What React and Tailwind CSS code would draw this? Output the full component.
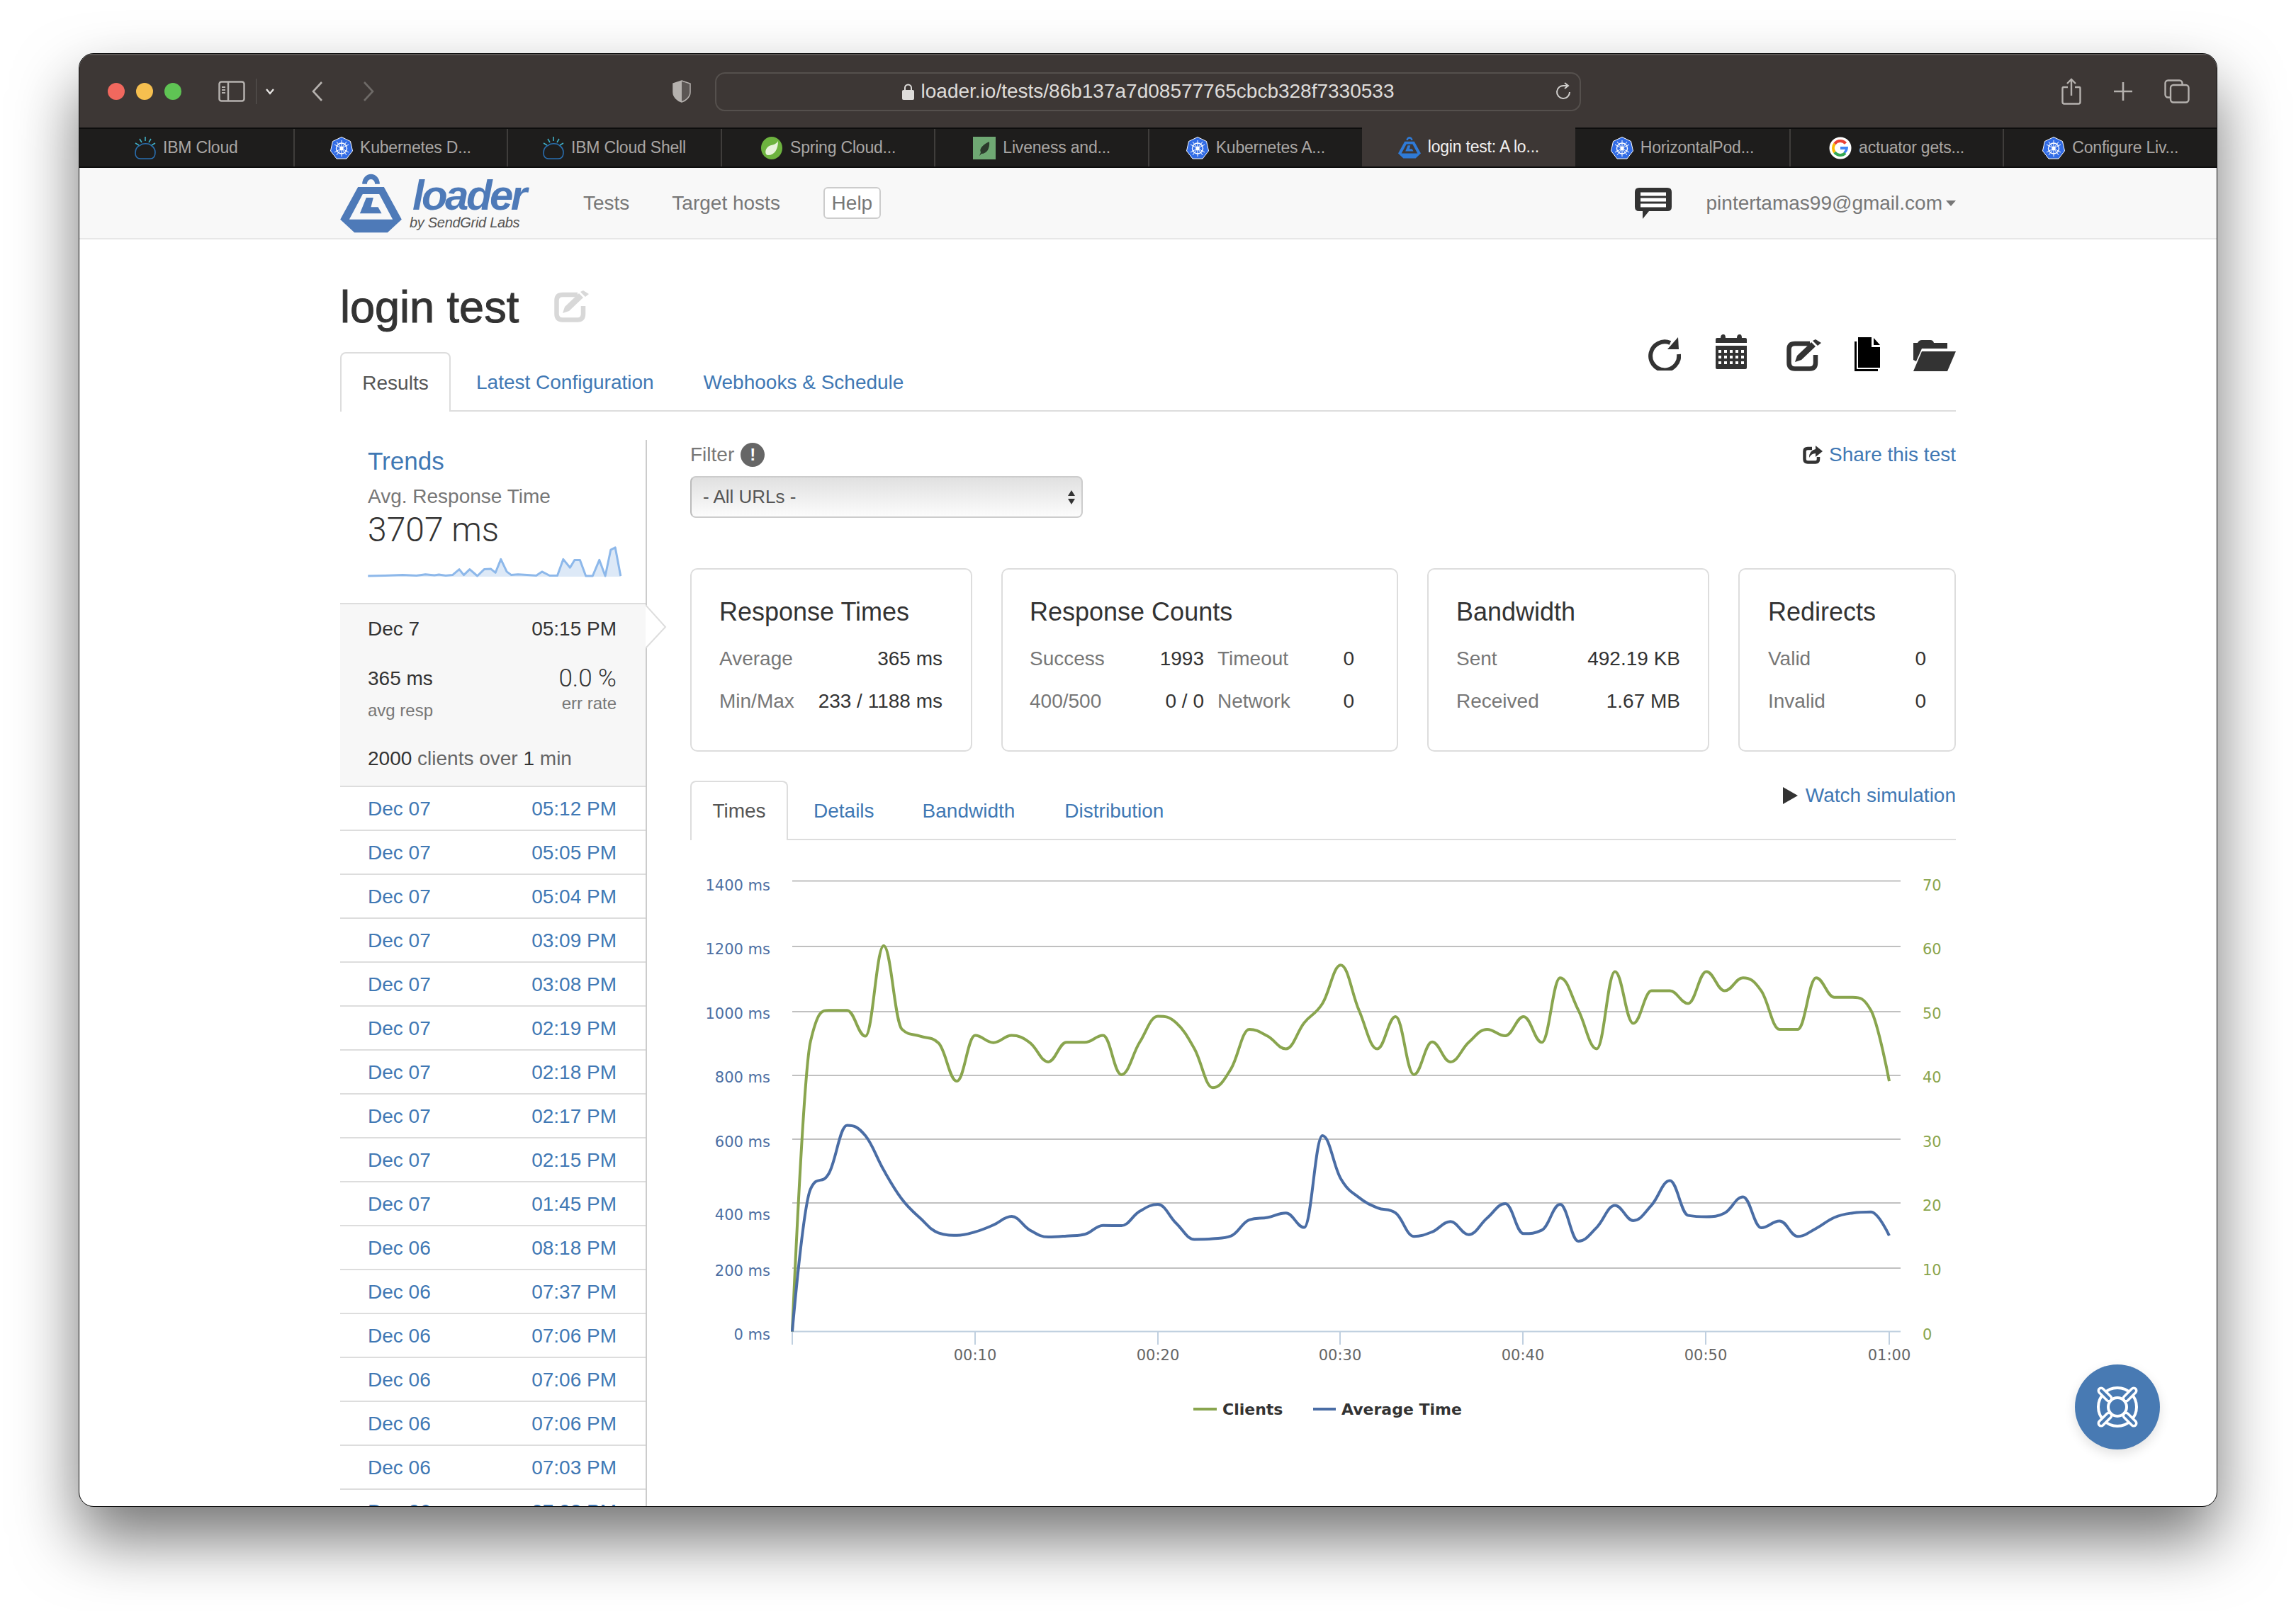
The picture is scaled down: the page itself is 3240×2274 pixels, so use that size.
import React from 'react';

const TABS = [
  { icon: 'ibm', label: 'IBM Cloud' },
  { icon: 'k8s', label: 'Kubernetes D...' },
  { icon: 'ibm', label: 'IBM Cloud Shell' },
  { icon: 'spring', label: 'Spring Cloud...' },
  { icon: 'leaf', label: 'Liveness and...' },
  { icon: 'k8s', label: 'Kubernetes A...' },
  { icon: 'loader', label: 'login test: A lo...', active: true },
  { icon: 'k8s', label: 'HorizontalPod...' },
  { icon: 'google', label: 'actuator gets...' },
  { icon: 'k8s', label: 'Configure Liv...' },
];

const RUNS = [
  ['Dec 07', '05:12 PM'], ['Dec 07', '05:05 PM'], ['Dec 07', '05:04 PM'], ['Dec 07', '03:09 PM'],
  ['Dec 07', '03:08 PM'], ['Dec 07', '02:19 PM'], ['Dec 07', '02:18 PM'], ['Dec 07', '02:17 PM'],
  ['Dec 07', '02:15 PM'], ['Dec 07', '01:45 PM'], ['Dec 06', '08:18 PM'], ['Dec 06', '07:37 PM'],
  ['Dec 06', '07:06 PM'], ['Dec 06', '07:06 PM'], ['Dec 06', '07:06 PM'], ['Dec 06', '07:03 PM'],
  ['Dec 06', '07:02 PM'],
];

// per-second samples, read off the chart (zoomed pixel rows)
const CLIENTS = [1445, 600, 510, 510, 585, 322, 565, 585, 605, 716, 583, 604, 583, 604, 660, 603, 603, 583, 697, 603, 527, 546, 622, 735, 680, 565, 585, 622, 546, 490, 378, 510, 622, 528, 697, 602, 660, 603, 565, 584, 528, 603, 415, 510, 622, 397, 548, 453, 453, 490, 397, 453, 415, 453, 565, 565, 415, 472, 472, 510, 716];
const AVG_TIME = [1445, 1030, 985, 845, 875, 975, 1060, 1115, 1158, 1165, 1155, 1135, 1110, 1150, 1170, 1167, 1162, 1136, 1137, 1095, 1075, 1130, 1177, 1175, 1167, 1120, 1113, 1100, 1142, 875, 1000, 1055, 1085, 1100, 1168, 1155, 1125, 1163, 1115, 1073, 1160, 1150, 1075, 1182, 1142, 1078, 1122, 1077, 1006, 1107, 1111, 1100, 1053, 1143, 1123, 1168, 1145, 1113, 1100, 1097, 1166];

const SPARK = [[93, 918], [130, 917], [170, 915], [200, 917], [220, 913], [240, 916], [250, 914], [265, 917], [280, 915], [295, 898], [305, 915], [318, 898], [335, 918], [350, 898], [365, 897], [375, 908], [387, 868], [400, 905], [410, 915], [425, 913], [445, 915], [465, 917], [478, 905], [495, 917], [512, 917], [525, 868], [540, 893], [550, 870], [562, 870], [575, 918], [590, 918], [605, 870], [618, 918], [630, 840], [640, 833], [652, 918]];

const GRID_Y = [1244.5, 1337, 1429, 1519, 1609, 1699, 1791, 1880.5];
const LEFT_LABELS = [['1400 ms', 1258], ['1200 ms', 1348], ['1000 ms', 1439], ['800 ms', 1529], ['600 ms', 1620], ['400 ms', 1723], ['200 ms', 1802], ['0 ms', 1892]];
const RIGHT_LABELS = [['70', 1258], ['60', 1348], ['50', 1439], ['40', 1529], ['30', 1620], ['20', 1710], ['10', 1801], ['0', 1892]];
const X_LABELS = [['00:10', 1376], ['00:20', 1634], ['00:30', 1891], ['00:40', 2149], ['00:50', 2407], ['01:00', 2666]];

// same curve the chart library draws: spline with smoothing 1.5
function splinePath(samples) {
  const pts = samples.map((py, t) => [1118 + 25.8 * t, 1180 + py / 2.063]);
  const conts = pts.map(([x, y], i) => {
    if (i === 0 || i === pts.length - 1) return null;
    const [lx, ly] = pts[i - 1];
    const [nx, ny] = pts[i + 1];
    let lcx = (1.5 * x + lx) / 2.5;
    let lcy = (1.5 * y + ly) / 2.5;
    let rcx = (1.5 * x + nx) / 2.5;
    let rcy = (1.5 * y + ny) / 2.5;
    const corr = ((rcy - lcy) * (rcx - x)) / (rcx - lcx) + y - rcy;
    lcy += corr;
    rcy += corr;
    if (lcy > ly && lcy > y) { lcy = Math.max(ly, y); rcy = 2 * y - lcy; }
    else if (lcy < ly && lcy < y) { lcy = Math.min(ly, y); rcy = 2 * y - lcy; }
    if (rcy > ny && rcy > y) { rcy = Math.max(ny, y); lcy = 2 * y - rcy; }
    else if (rcy < ny && rcy < y) { rcy = Math.min(ny, y); lcy = 2 * y - rcy; }
    return { lcx, lcy, rcx, rcy };
  });
  let d = `M${pts[0][0]} ${pts[0][1]}`;
  for (let i = 1; i < pts.length; i++) {
    const a = conts[i - 1] ? [conts[i - 1].rcx, conts[i - 1].rcy] : pts[i - 1];
    const b = conts[i] ? [conts[i].lcx, conts[i].lcy] : pts[i];
    d += ` C${a[0].toFixed(1)} ${a[1].toFixed(1)} ${b[0].toFixed(1)} ${b[1].toFixed(1)} ${pts[i][0].toFixed(1)} ${pts[i][1].toFixed(1)}`;
  }
  return d;
}

const K8sIcon = () => (
  <svg width="32" height="32" viewBox="0 0 32 32">
    <path d="M16 0.5 L28.5 6.5 L31.5 20 L23 31 L9 31 L0.5 20 L3.5 6.5 Z" fill="#326ce5" stroke="#fff" strokeWidth="1" />
    <g stroke="#fff" strokeWidth="1.4" fill="none">
      <circle cx="16" cy="16.5" r="7.5" />
      <circle cx="16" cy="16.5" r="2" fill="#fff" />
      <path d="M16 5 V28 M6 11 L26 22 M26 11 L6 22 M9 26 L23 7 M23 26 L9 7" strokeWidth="1" />
    </g>
  </svg>
);

const IbmIcon = () => (
  <svg width="30" height="32" viewBox="0 0 30 32" fill="none">
    <path d="M8 31 H22 C27 31 29 27 29 22 C29 17 26 14 23 12 C20 9 11 9 8 12 C3 14 1 18 1 23 C1 28 4 31 8 31 Z" stroke="#2a6fb0" strokeWidth="1.6" />
    <path d="M15 0 V6 M7 3 L10 8 M23 3 L20 8 M1 9 L6 12 M29 9 L24 12" stroke="#3fb0c6" strokeWidth="1.6" />
  </svg>
);

const SpringIcon = () => (
  <svg width="32" height="32" viewBox="0 0 32 32">
    <ellipse cx="16" cy="16" rx="15" ry="16" fill="#6db33f" />
    <path d="M25 6 C25 18 20 26 11 26 C6 26 6 18 11 14 C15 11 22 12 25 6 Z" fill="#e8f3dc" />
  </svg>
);

const LeafIcon = () => (
  <svg width="32" height="32" viewBox="0 0 32 32">
    <rect width="32" height="32" fill="#6fa873" />
    <path d="M23 7 C24 16 20 24 12 24 L9 27 L11 22 C8 16 16 10 23 7 Z" fill="#2c3a2c" />
  </svg>
);

const LoaderMark = ({ color = '#4e7ab8', width = 87, height = 85 }) => (
  <svg width={width} height={height} viewBox="30 15 260 255" className="shrink-0">
    <path fillRule="evenodd" fill={color} d="M105 75 H215 L290 212 L230 268 H90 L30 212 Z M125 105 L68 212 H252 L195 105 Z" />
    <path fill={color} d="M140 120 H170 L160 160 H190 L205 187 H113 Z" />
    <path fill={color} d="M123 62 A37 42 0 0 1 197 62 H177 A17 20 0 0 0 143 62 Z" />
  </svg>
);

const GoogleIcon = () => (
  <svg width="32" height="32" viewBox="0 0 32 32">
    <circle cx="16" cy="16" r="15.5" fill="#fff" />
    <path d="M23.5 9.5 A10 10 0 0 0 8 10" fill="none" stroke="#ea4335" strokeWidth="4" />
    <path d="M8 10 A10 10 0 0 0 8 22" fill="none" stroke="#fbbc05" strokeWidth="4" />
    <path d="M8 22 A10 10 0 0 0 23 23" fill="none" stroke="#34a853" strokeWidth="4" />
    <path d="M16 14 H27 C27 18 26 21 23 23.5 L20.5 21 C22 20 22.5 19 23 18 H16 Z" fill="#4285f4" />
  </svg>
);

const FAVICONS = {
  k8s: <K8sIcon />,
  ibm: <IbmIcon />,
  spring: <SpringIcon />,
  leaf: <LeafIcon />,
  google: <GoogleIcon />,
  loader: <LoaderMark color="#2f7ad6" width={32} height={32} />,
};

const EditIcon = ({ color = '#333', width = 49, height = 45 }) => (
  <svg width={width} height={height} viewBox="0 0 49 45">
    <path fill="none" stroke={color} strokeWidth="6.5" strokeLinejoin="round" d="M33 6 H12 Q3.5 6 3.5 14 V33 Q3.5 41.5 12 41.5 H33 Q41 41.5 41 33 V22" />
    <path fill={color} d="M12 32 L15 23 L35 4 L41 10 L21 29 Z M37 2 L41 0 L49 5 L44 9 Z" />
  </svg>
);

const Toolbar = () => (
  <div className="flex items-start -mt-[25px] text-[#333]">
    <svg width="46" height="47" viewBox="0 0 46 47" className="mt-1">
      <path d="M31 8 A20 20 0 1 0 43 24" fill="none" stroke="#333" strokeWidth="6" />
      <path d="M42 0 L43 17 L27 17 Z" fill="#333" />
    </svg>
    <svg width="44" height="49" viewBox="0 0 44 49" className="ml-[49px]">
      <path fill="#333" fillRule="evenodd" d="M2 5 H7 Q7 0 11 0 Q14 0 14 5 H30 Q30 0 34 0 Q37 0 37 5 H42 Q44 5 44 7 V12 H0 V7 Q0 5 2 5 Z" />
      <path fill="#333" fillRule="evenodd" d="M0 16 H44 V47 Q44 49 42 49 H2 Q0 49 0 47 Z M4 22 V26 H8 V22 Z M12 22 V26 H16 V22 Z M20 22 V26 H24 V22 Z M28 22 V26 H32 V22 Z M36 22 V26 H40 V22 Z M4 30 V34 H8 V30 Z M12 30 V34 H16 V30 Z M20 30 V34 H24 V30 Z M28 30 V34 H32 V30 Z M36 30 V34 H40 V30 Z M4 38 V42 H8 V38 Z M12 38 V42 H16 V38 Z M20 38 V42 H24 V38 Z M28 38 V42 H32 V38 Z M36 38 V42 H40 V38 Z" />
    </svg>
    <span className="ml-[56px] mt-[7px]"><EditIcon /></span>
    <svg width="36" height="48" viewBox="0 0 36 48" className="ml-[47px] mt-[4px]">
      <path fill="#000" d="M5 0 H24 V14 H36 V43 H5 Z M27 1 L36 11 H27 Z" />
      <path fill="#000" d="M0 6 H3 V45 H33 V48 H0 Z" />
    </svg>
    <svg width="60" height="44" viewBox="0 0 60 44" className="ml-[47px] mt-[8px]">
      <path fill="#333" d="M0 4 H6 Q8 0 12 0 H24 Q28 0 29 4 H48 V12 H12 L4 30 L0 28 Z" />
      <path fill="#333" d="M12 16 H60 L48 44 H0 Z" />
    </svg>
  </div>
);

const Card = ({ title, className, children }) => (
  <div className={`h-[259px] shrink-0 border-2 border-[#ddd] rounded-[10px] ${className}`}>
    <div className="pt-[40px] h-[96px] text-[36px] leading-[40px] text-[#333]">{title}</div>
    {children}
  </div>
);

const Stat = ({ label, value }) => (
  <div className="flex justify-between h-[60px] text-[28px] leading-[60px] whitespace-nowrap">
    <span className="text-[#777]">{label}</span>
    <span className="text-[#333]">{value}</span>
  </div>
);

const Chart = () => (
  <svg width="1786" height="860" viewBox="974 1187 1786 860" className="font-['DejaVu_Sans',sans-serif] text-[21px] block">
    {GRID_Y.slice(0, 7).map((y) => (
      <line key={y} x1="1118" x2="2682" y1={y} y2={y} stroke="#c0c0c0" strokeWidth="2" />
    ))}
    <line x1="1118" x2="2682" y1="1880.5" y2="1880.5" stroke="#c0d0e0" strokeWidth="2" />
    {[1118, 1376, 1634, 1891, 2149, 2407, 2666].map((x) => (
      <line key={x} x1={x} x2={x} y1="1880" y2="1899" stroke="#c0d0e0" strokeWidth="2" />
    ))}
    {LEFT_LABELS.map(([t, y]) => (
      <text key={t} x="1087" y={y} textAnchor="end" className="fill-[#4d6fa3]">{t}</text>
    ))}
    {RIGHT_LABELS.map(([t, y]) => (
      <text key={t} x="2713" y={y} className="fill-[#89a54e]">{t}</text>
    ))}
    {X_LABELS.map(([t, x]) => (
      <text key={t} x={x} y="1921" textAnchor="middle" className="fill-[#666]">{t}</text>
    ))}
    <path d={splinePath(CLIENTS)} fill="none" stroke="#89a54e" strokeWidth="4" strokeLinejoin="round" />
    <path d={splinePath(AVG_TIME)} fill="none" stroke="#4a6da5" strokeWidth="4" strokeLinejoin="round" />
    <line x1="1684" x2="1717" y1="1990" y2="1990" stroke="#89a54e" strokeWidth="4" />
    <text x="1725" y="1998" className="fill-[#333] font-bold text-[22px]">Clients</text>
    <line x1="1853" x2="1885" y1="1990" y2="1990" stroke="#4a6da5" strokeWidth="4" />
    <text x="1893" y="1998" className="fill-[#333] font-bold text-[22px]">Average Time</text>
  </svg>
);

const Sparkline = () => {
  const pts = SPARK.map(([x, y]) => `${(x / 1.568).toFixed(1)},${(y / 2.12).toFixed(1)}`);
  return (
    <svg width="362" height="48" viewBox="59 391 362 48" className="block -mt-[2px]">
      <polygon points={`59,434 ${pts.join(' ')} 416,434`} fill="#dde9f7" />
      <polyline points={pts.join(' ')} fill="none" stroke="#8db8ea" strokeWidth="3" strokeLinejoin="round" />
    </svg>
  );
};

export default function App() {
  return (
    <div className="w-[3240px] h-[2274px] bg-white overflow-hidden pl-[112px] pt-[76px] font-['Liberation_Sans',Arial,sans-serif]">
      <div className="relative w-[3016px] h-[2050px] rounded-[20px] overflow-hidden flex flex-col bg-white outline-1 outline-[#111] shadow-[0_46px_90px_rgba(0,0,0,0.55)]">
        {/* title bar */}
        <div className="h-[104px] shrink-0 bg-[#3d3735] flex items-center pl-[40px] border-t-2 border-[#5b5654]">
          <span className="w-[24px] h-[24px] rounded-full bg-[#f1685e]" />
          <span className="w-[24px] h-[24px] rounded-full bg-[#f6bf4f] ml-[16px]" />
          <span className="w-[24px] h-[24px] rounded-full bg-[#5fc454] ml-[16px]" />
          <svg width="38" height="30" viewBox="0 0 38 30" fill="none" className="ml-[52px]">
            <rect x="1.5" y="1.5" width="35" height="27" rx="3" stroke="#b5b1ae" strokeWidth="2.5" />
            <path d="M14 2 V28" stroke="#b5b1ae" strokeWidth="2.5" />
            <path d="M5 9 H10 M5 13 H10 M5 17 H10" stroke="#b5b1ae" strokeWidth="2" />
          </svg>
          <span className="w-[1px] h-[36px] bg-[#5b5654] ml-[15px]" />
          <svg width="14" height="10" viewBox="0 0 14 10" fill="none" className="ml-[12px]">
            <path d="M2 2 L7 8 L12 2" stroke="#e5e3e1" strokeWidth="2.4" />
          </svg>
          <svg width="18" height="30" viewBox="0 0 18 30" fill="none" className="ml-[51px]">
            <path d="M15 2 L3 15 L15 28" stroke="#b5b1ae" strokeWidth="2.6" />
          </svg>
          <svg width="18" height="30" viewBox="0 0 18 30" fill="none" className="ml-[54px]">
            <path d="M3 2 L15 15 L3 28" stroke="#6e6a67" strokeWidth="2.6" />
          </svg>
          <svg width="26" height="32" viewBox="0 0 26 32" className="ml-[420px]">
            <path d="M13 1 L25 5 V17 C25 24 19 29 13 31 C7 29 1 24 1 17 V5 Z" fill="#5b5654" stroke="#b5b1ae" strokeWidth="1.5" />
            <path d="M13 1 L1 5 V17 C1 24 7 29 13 31 Z" fill="#b5b1ae" />
          </svg>
          <div className="relative ml-[34px] w-[1222px] h-[55px] rounded-[14px] border-2 border-[#55504d] flex items-center justify-center gap-[10px] text-[#dedcda] text-[28px]">
            <svg width="17" height="23" viewBox="0 0 17 23">
              <path d="M4 10 V6 A4.5 4.5 0 0 1 13 6 V10" fill="none" stroke="#dedcda" strokeWidth="2" />
              <rect y="9" width="17" height="14" rx="2" fill="#dedcda" />
            </svg>
            <span>loader.io/tests/86b137a7d08577765cbcb328f7330533</span>
            <svg width="24" height="26" viewBox="0 0 24 26" fill="none" className="absolute right-[10px] top-[12px]">
              <path d="M20 14 A9 9 0 1 1 12 5 H17" stroke="#cfcdcb" strokeWidth="2" />
              <path d="M13 1 L18 5 L13 9" stroke="#cfcdcb" strokeWidth="2" />
            </svg>
          </div>
          <svg width="28" height="38" viewBox="0 0 28 38" fill="none" className="ml-[678px]">
            <path d="M9 13 H3 Q1.5 13 1.5 15 V34 Q1.5 36.5 4 36.5 H24 Q26.5 36.5 26.5 34 V15 Q26.5 13 25 13 H19" stroke="#b5b1ae" strokeWidth="2.4" />
            <path d="M14 25 V2 M8 8 L14 2 L20 8" stroke="#b5b1ae" strokeWidth="2.4" />
          </svg>
          <svg width="30" height="30" viewBox="0 0 30 30" fill="none" className="ml-[44px]">
            <path d="M15 2 V28 M2 15 H28" stroke="#b5b1ae" strokeWidth="2.6" />
          </svg>
          <svg width="36" height="34" viewBox="0 0 36 34" fill="none" className="ml-[43px]">
            <rect x="1.5" y="1.5" width="24" height="24" rx="4" stroke="#b5b1ae" strokeWidth="2.4" />
            <rect x="9" y="8" width="25.5" height="24.5" rx="4" fill="#3d3735" stroke="#b5b1ae" strokeWidth="2.4" />
          </svg>
        </div>

        {/* tab bar */}
        <div className="h-[57px] shrink-0 grid grid-cols-10 bg-[#1e1d1c] border-y-2 border-[#0d0d0d]">
          {TABS.map((tab, i) => (
            <div
              key={i}
              className={`flex items-center justify-center gap-[10px] text-[23px] tracking-[-0.2px] whitespace-nowrap ${
                tab.active ? 'bg-[#3d3735] text-[#f2f0ef] -mt-[2px]' : 'text-[#a9a6a4]'
              } ${i > 0 && !tab.active && !TABS[i - 1].active ? 'border-l-2 border-[#3f3d3b]' : ''}`}
            >
              {FAVICONS[tab.icon]}
              <span>{tab.label}</span>
            </div>
          ))}
        </div>

        {/* loader.io nav */}
        <div className="h-[101px] shrink-0 bg-[#f8f8f8] border-b-2 border-[#e7e7e7]">
          <div className="w-[2280px] mx-auto h-full flex items-center text-[28px] text-[#777]">
            <LoaderMark />
            <div className="ml-[15px] w-[160px] shrink-0 pt-[4px]">
              <div className="text-[60px] leading-[50px] font-bold italic tracking-[-3.6px] text-[#4e7ab8]">loader</div>
              <div className="text-[20px] leading-[26px] italic tracking-[-0.3px] text-[#555] -ml-[4px] whitespace-nowrap">by SendGrid Labs</div>
            </div>
            <span className="ml-[81px]">Tests</span>
            <span className="ml-[60px]">Target hosts</span>
            <span className="ml-[61px] w-[81px] h-[45px] flex items-center justify-center bg-white border-2 border-[#ccc] rounded-[6px]">Help</span>
            <svg width="52" height="44" viewBox="0 0 52 44" className="ml-auto">
              <path fill="#333" d="M6 0 H46 Q52 0 52 6 V27 Q52 33 46 33 H20 L11 44 V33 H6 Q0 33 0 27 V6 Q0 0 6 0 Z" />
              <path stroke="#fff" strokeWidth="5" d="M8 9 H44 M8 17 H44 M8 25 H44" />
            </svg>
            <span className="ml-[49px]">pintertamas99@gmail.com</span>
            <span className="ml-[5px] w-0 h-0 border-x-[7px] border-x-transparent border-t-[8px] border-t-[#777]" />
          </div>
        </div>

        {/* page */}
        <div className="flex-1 min-h-0 overflow-hidden w-[2280px] mx-auto text-[28px] text-[#333]">
          <div className="flex items-center pt-[30px] h-[159px]">
            <h1 className="text-[63px] leading-[70px] [-webkit-text-stroke:1px_#333]">login test</h1>
            <span className="ml-[50px]"><EditIcon color="#d8d8d8" /></span>
          </div>

          <div className="flex justify-between items-start h-[84px] border-b-2 border-[#ddd]">
            <div className="flex items-center h-[84px]">
              <div className="w-[156px] h-[84px] pt-[2px] flex items-center justify-center bg-white border-2 border-b-0 border-[#ddd] rounded-t-[8px] text-[#555]">Results</div>
              <a className="ml-[36px] pt-[2px] text-[#4078b4]">Latest Configuration</a>
              <a className="ml-[70px] pt-[2px] text-[#4078b4]">Webhooks &amp; Schedule</a>
            </div>
            <Toolbar />
          </div>

          <div className="flex mt-[40px]">
            {/* trends + runs */}
            <div className="relative w-[433px] shrink-0 border-r-2 border-[#ccc]">
              <div className="h-[232px] border-b-2 border-[#ddd] pl-[39px]">
                <div className="pt-[12px] text-[35px] leading-[36px] text-[#4078b4]">Trends</div>
                <div className="mt-[16px] text-[28px] leading-[32px] text-[#777]">Avg. Response Time</div>
                <div className="mt-[6px] text-[48px] leading-[50px] font-light font-['Roboto',sans-serif] text-[#333]">3707 ms</div>
                <Sparkline />
              </div>
              <div className="h-[258px] bg-[#f7f7f7] border-b-2 border-[#ddd] pl-[39px] pr-[41px]">
                <div className="flex justify-between pt-[18px] leading-[34px]">
                  <span>Dec 7</span>
                  <span>05:15 PM</span>
                </div>
                <div className="flex justify-between mt-[34px]">
                  <div className="pt-[2px]">
                    <div className="leading-[34px]">365 ms</div>
                    <div className="mt-[13px] text-[24px] leading-[30px] text-[#777]">avg resp</div>
                  </div>
                  <div className="text-right">
                    <div className="text-[35px] leading-[38px] font-light font-['Roboto',sans-serif]">0.0 %</div>
                    <div className="mt-[1px] text-[24px] leading-[30px] text-[#777]">err rate</div>
                  </div>
                </div>
                <div className="mt-[36px] leading-[34px] text-[#666]"><span className="text-[#333]">2000</span> clients over <span className="text-[#333]">1</span> min</div>
              </div>
              <svg width="30" height="62" viewBox="0 0 30 62" className="absolute left-[431px] top-[233px]">
                <path d="M0 0 L28 31 L0 61" fill="#fff" stroke="#ddd" strokeWidth="2" />
              </svg>
              {RUNS.map(([day, time], i) => (
                <div key={i} className="h-[62px] pt-[2px] border-b-2 border-[#ddd] pl-[39px] pr-[41px] flex justify-between items-center text-[#4078b4]">
                  <span>{day}</span>
                  <span>{time}</span>
                </div>
              ))}
            </div>

            {/* results */}
            <div className="ml-[61px] w-[1786px] shrink-0">
              <div className="flex justify-between items-center h-[42px]">
                <div className="flex items-center gap-[9px] text-[#777]">
                  Filter
                  <span className="w-[34px] h-[34px] rounded-full bg-[#666] text-white font-bold text-[24px] flex items-center justify-center">!</span>
                </div>
                <div className="flex items-center gap-[9px] text-[#4078b4]">
                  <svg width="28" height="26" viewBox="0 0 28 26">
                    <path fill="none" stroke="#333" strokeWidth="4.5" strokeLinejoin="round" d="M13 4 H7 Q2.5 4 2.5 8 V19 Q2.5 23.5 7 23.5 H18 Q22 23.5 22 19 V16" />
                    <path fill="#333" d="M18 0 L28 8 L18 16 V11 Q12 11 9 17 Q9 7 18 5 Z" />
                  </svg>
                  Share this test
                </div>
              </div>
              <div className="mt-[9px] w-[554px] h-[59px] rounded-[8px] border-2 border-[#ccc] border-l-[#bbb] bg-gradient-to-b from-[#e0e0e0] to-[#fcfcfc] flex items-center justify-between pl-[16px] pr-[8px] text-[26px] text-[#555]">
                <span>- All URLs -</span>
                <svg width="12" height="24" viewBox="0 0 12 24">
                  <path fill="#333" d="M6 2 L11 10 H1 Z M6 22 L11 14 H1 Z" />
                </svg>
              </div>

              <div className="flex gap-[41px] mt-[71px]">
                <Card title="Response Times" className="w-[398px] pl-[39px] pr-[40px]">
                  <Stat label="Average" value="365 ms" />
                  <Stat label="Min/Max" value="233 / 1188 ms" />
                </Card>
                <Card title="Response Counts" className="w-[560px] pl-[38px] pr-[60px]">
                  <div className="grid grid-cols-[246px_1fr] gap-x-[19px]">
                    <Stat label="Success" value="1993" />
                    <Stat label="Timeout" value="0" />
                    <Stat label="400/500" value="0 / 0" />
                    <Stat label="Network" value="0" />
                  </div>
                </Card>
                <Card title="Bandwidth" className="w-[398px] pl-[39px] pr-[39px]">
                  <Stat label="Sent" value="492.19 KB" />
                  <Stat label="Received" value="1.67 MB" />
                </Card>
                <Card title="Redirects" className="w-[307px] pl-[40px] pr-[40px]">
                  <Stat label="Valid" value="0" />
                  <Stat label="Invalid" value="0" />
                </Card>
              </div>

              <div className="mt-[41px] flex items-start h-[84px] border-b-2 border-[#ddd]">
                <div className="w-[138px] h-[84px] flex items-center justify-center bg-white border-2 border-b-0 border-[#ddd] rounded-t-[8px] text-[#555]">Times</div>
                <a className="ml-[36px] mt-[22px] text-[#4078b4]">Details</a>
                <a className="ml-[68px] mt-[22px] text-[#4078b4]">Bandwidth</a>
                <a className="ml-[70px] mt-[22px] text-[#4078b4]">Distribution</a>
                <div className="ml-auto flex items-center gap-[11px] text-[#4078b4]">
                  <span className="w-0 h-0 border-y-[12px] border-y-transparent border-l-[21px] border-l-[#333]" />
                  Watch simulation
                </div>
              </div>
              <Chart />
            </div>
          </div>
        </div>

        {/* help bubble */}
        <div className="absolute left-[2816px] top-[1850px] w-[120px] h-[120px] rounded-full bg-[#487ab3] shadow-[0_6px_16px_rgba(0,0,0,0.12)] flex items-center justify-center">
          <svg width="62" height="62" viewBox="-31 -31 62 62" fill="none">
            <circle r="27" stroke="#fff" strokeWidth="4" />
            <g stroke="#fff" strokeLinecap="round" strokeWidth="11">
              <path d="M-23 -23 L-12 -12 M23 -23 L12 -12 M-23 23 L-12 12 M23 23 L12 12" />
            </g>
            <g stroke="#487ab3" strokeLinecap="round" strokeWidth="4">
              <path d="M-23 -23 L-12 -12 M23 -23 L12 -12 M-23 23 L-12 12 M23 23 L12 12" />
            </g>
            <circle r="13" fill="#487ab3" stroke="#fff" strokeWidth="4" />
          </svg>
        </div>
      </div>
    </div>
  );
}
